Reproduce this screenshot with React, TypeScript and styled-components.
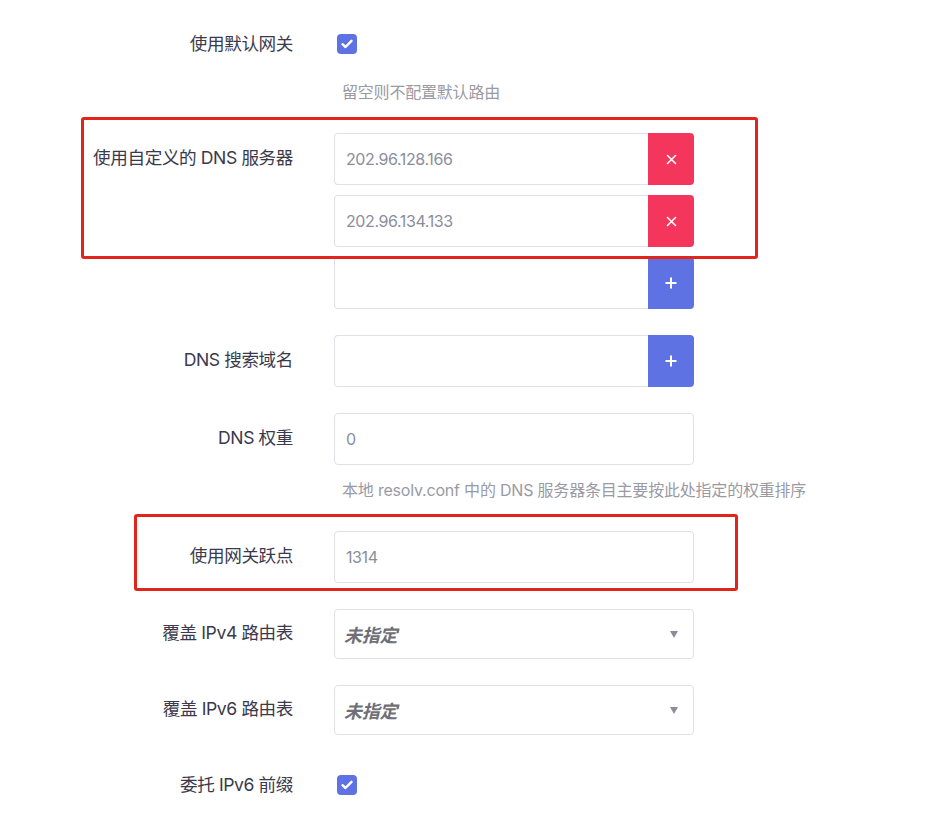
import styled, { createGlobalStyle } from "styled-components";

const GlobalStyle = createGlobalStyle`
  html, body {
    margin: 0;
    padding: 0;
    background: #ffffff;
  }
  body {
    font-family: Inter, "Noto Sans CJK SC", sans-serif;
    color: #3b3b4f;
  }
`;

const Page = styled.div`
  position: relative;
  width: 941px;
  height: 817px;
  padding-top: 34px;
  box-sizing: border-box;
  overflow: hidden;
`;

const Row = styled.div<{ $gap?: number }>`
  display: grid;
  grid-template-columns: 293px 360px;
  column-gap: 41px;
  margin-bottom: ${(p) => (p.$gap ?? 26)}px;
`;

const Label = styled.div<{ $h: number }>`
  text-align: right;
  font-size: 17.6px;
  line-height: ${(p) => p.$h}px;
  color: #3a3a4c;
  white-space: nowrap;
  letter-spacing: -0.4px;
`;

const Stack = styled.div`
  display: flex;
  flex-direction: column;
  gap: 10px;
`;

const Hint = styled.div<{ $top: number; $bottom: number }>`
  margin: ${(p) => p.$top}px 0 ${(p) => p.$bottom}px 342px;
  font-size: 16px;
  line-height: 24px;
  color: #9a9aa4;
  white-space: nowrap;
  letter-spacing: -0.2px;
`;

const InputGroup = styled.div`
  display: flex;
  height: 52px;
`;

const TextBox = styled.div<{ $joined?: boolean }>`
  flex: 1;
  box-sizing: border-box;
  border: 1px solid #dfe1e6;
  border-radius: ${(p) => (p.$joined ? "4px 0 0 4px" : "4px")};
  ${(p) => (p.$joined ? "border-right: none;" : "")}
  padding: 0 11px;
  display: flex;
  align-items: center;
  font-size: 16px;
  color: #8a8e9c;
  letter-spacing: -0.4px;
`;

const AddonButton = styled.div<{ $variant: "danger" | "primary" }>`
  width: 46px;
  flex: none;
  border-radius: 0 4px 4px 0;
  background: ${(p) => (p.$variant === "danger" ? "#f5365c" : "#5e72e4")};
  display: flex;
  align-items: center;
  justify-content: center;
`;

const Select = styled.div`
  height: 50px;
  box-sizing: border-box;
  border: 1px solid #dfe1e6;
  border-radius: 4px;
  padding: 0 15px 0 9px;
  display: flex;
  align-items: center;
  justify-content: space-between;
`;

const SelectText = styled.span`
  font-size: 18px;
  font-weight: 700;
  font-style: italic;
  color: #6f6f76;
  letter-spacing: -0.3px;
`;

const Caret = styled.span`
  width: 0;
  height: 0;
  border-left: 4px solid transparent;
  border-right: 4px solid transparent;
  border-top: 7px solid #8a8e98;
`;

const CheckBox = styled.div`
  width: 20px;
  height: 20px;
  margin-left: 3px;
  border-radius: 4px;
  background: #5e72e4;
  display: flex;
  align-items: center;
  justify-content: center;
`;

const Marker = styled.div<{ $l: number; $t: number; $w: number; $h: number }>`
  position: absolute;
  left: ${(p) => p.$l}px;
  top: ${(p) => p.$t}px;
  width: ${(p) => p.$w}px;
  height: ${(p) => p.$h}px;
  box-sizing: border-box;
  border: 3px solid #e1251b;
  border-radius: 3px;
  pointer-events: none;
`;

function Check() {
  return (
    <CheckBox>
      <svg width="12" height="10" viewBox="0 0 12 10">
        <path d="M1.5 5.2 L4.5 8 L10.5 1.8" fill="none" stroke="#fff" strokeWidth="2.4" strokeLinecap="round" strokeLinejoin="round" />
      </svg>
    </CheckBox>
  );
}

function Cross() {
  return (
    <svg width="11" height="11" viewBox="0 0 11 11">
      <path d="M1.5 1.5 L9.5 9.5 M9.5 1.5 L1.5 9.5" stroke="#fff" strokeWidth="1.6" strokeLinecap="round" />
    </svg>
  );
}

function Plus() {
  return (
    <svg width="12" height="12" viewBox="0 0 12 12">
      <path d="M6 0.5 V11.5 M0.5 6 H11.5" stroke="#fff" strokeWidth="2" />
    </svg>
  );
}

function ListInput({ value, action }: { value?: string; action: "remove" | "add" }) {
  return (
    <InputGroup>
      <TextBox $joined>{value}</TextBox>
      <AddonButton $variant={action === "remove" ? "danger" : "primary"}>
        {action === "remove" ? <Cross /> : <Plus />}
      </AddonButton>
    </InputGroup>
  );
}

export default function App() {
  return (
    <Page>
      <GlobalStyle />
      <Row $gap={0}>
        <Label $h={20}>使用默认网关</Label>
        <Check />
      </Row>
      <Hint $top={26} $bottom={29}>留空则不配置默认路由</Hint>

      <Row>
        <Label $h={50}>使用自定义的 DNS 服务器</Label>
        <Stack>
          <ListInput value="202.96.128.166" action="remove" />
          <ListInput value="202.96.134.133" action="remove" />
          <ListInput action="add" />
        </Stack>
      </Row>

      <Row>
        <Label $h={50}>DNS 搜索域名</Label>
        <ListInput action="add" />
      </Row>

      <Row $gap={0}>
        <Label $h={50}>DNS 权重</Label>
        <InputGroup>
          <TextBox>0</TextBox>
        </InputGroup>
      </Row>
      <Hint $top={13} $bottom={29}>本地 resolv.conf 中的 DNS 服务器条目主要按此处指定的权重排序</Hint>

      <Row>
        <Label $h={50}>使用网关跃点</Label>
        <InputGroup>
          <TextBox>1314</TextBox>
        </InputGroup>
      </Row>

      <Row>
        <Label $h={48}>覆盖 IPv4 路由表</Label>
        <Select>
          <SelectText>未指定</SelectText>
          <Caret />
        </Select>
      </Row>

      <Row $gap={40}>
        <Label $h={48}>覆盖 IPv6 路由表</Label>
        <Select>
          <SelectText>未指定</SelectText>
          <Caret />
        </Select>
      </Row>

      <Row>
        <Label $h={20}>委托 IPv6 前缀</Label>
        <Check />
      </Row>

      <Marker $l={81} $t={117} $w={677} $h={142} />
      <Marker $l={134} $t={514} $w={604} $h={77} />
    </Page>
  );
}
